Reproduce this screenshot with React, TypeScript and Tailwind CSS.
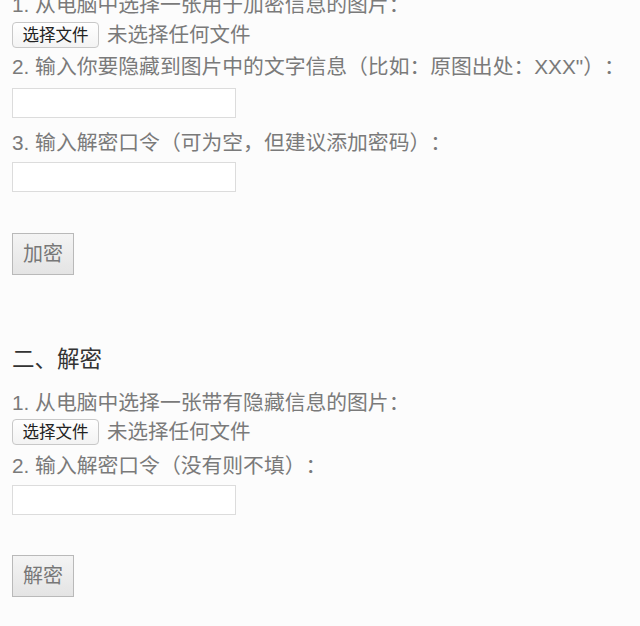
import React from 'react';

const font = { fontFamily: '"Liberation Sans", "Noto Sans CJK SC", sans-serif' };

const FileRow = () => (
  <div className="flex h-[30px] items-center gap-2">
    <button className="h-[26px] w-[87px] rounded-[4px] border border-[#c8c8c8] bg-gradient-to-b from-white to-[#f3f3f3] text-[16.5px] leading-none text-[#222]">
      选择文件
    </button>
    <span className="text-[20.5px] text-[#7a7a7a]">未选择任何文件</span>
  </div>
);

const TextInput = () => (
  <input
    type="text"
    className="block h-[30px] w-[224px] border border-[#dcdcdc] bg-white outline-none"
  />
);

const ActionButton = ({ label }: { label: string }) => (
  <button className="h-[42px] w-[62px] border border-[#b9b9b9] bg-gradient-to-b from-[#f4f4f4] to-[#e4e4e4] text-[20px] text-[#777]">
    {label}
  </button>
);

export default function App() {
  return (
    <div className="h-[626px] overflow-hidden bg-[#fcfcfc] px-3 [text-spacing-trim:space-all]" style={font}>
      {/* 一、加密 */}
      <div className="-mt-[10px] flex flex-col">
        <p className="h-[30px] text-[20.8px] leading-[30px] text-[#7a7a7a]">1. 从电脑中选择一张用于加密信息的图片：</p>
        <FileRow />
        <p className="mt-[2px] h-[30px] whitespace-nowrap text-[20.8px] leading-[30px] text-[#7a7a7a]">
          2. 输入你要隐藏到图片中的文字信息（比如：原图出处：XXX"）：
        </p>
        <div className="mt-[6px]">
          <TextInput />
        </div>
        <p className="mt-[10px] h-[30px] text-[20.8px] leading-[30px] text-[#7a7a7a]">3. 输入解密口令（可为空，但建议添加密码）：</p>
        <div className="mt-[4px]">
          <TextInput />
        </div>
        <div className="mt-[41px]">
          <ActionButton label="加密" />
        </div>
      </div>

      {/* 二、解密 */}
      <div className="mt-[70px] flex flex-col">
        <h2 className="h-[30px] text-[22.5px] leading-[30px] text-[#333]">二、解密</h2>
        <p className="mt-[14px] h-[28px] text-[20.8px] leading-[28px] text-[#7a7a7a]">1. 从电脑中选择一张带有隐藏信息的图片：</p>
        <FileRow />
        <p className="mt-[4px] h-[30px] text-[20.8px] leading-[30px] text-[#7a7a7a]">2. 输入解密口令（没有则不填）：</p>
        <div className="mt-[4px]">
          <TextInput />
        </div>
        <div className="mt-[40px]">
          <ActionButton label="解密" />
        </div>
      </div>
    </div>
  );
}
